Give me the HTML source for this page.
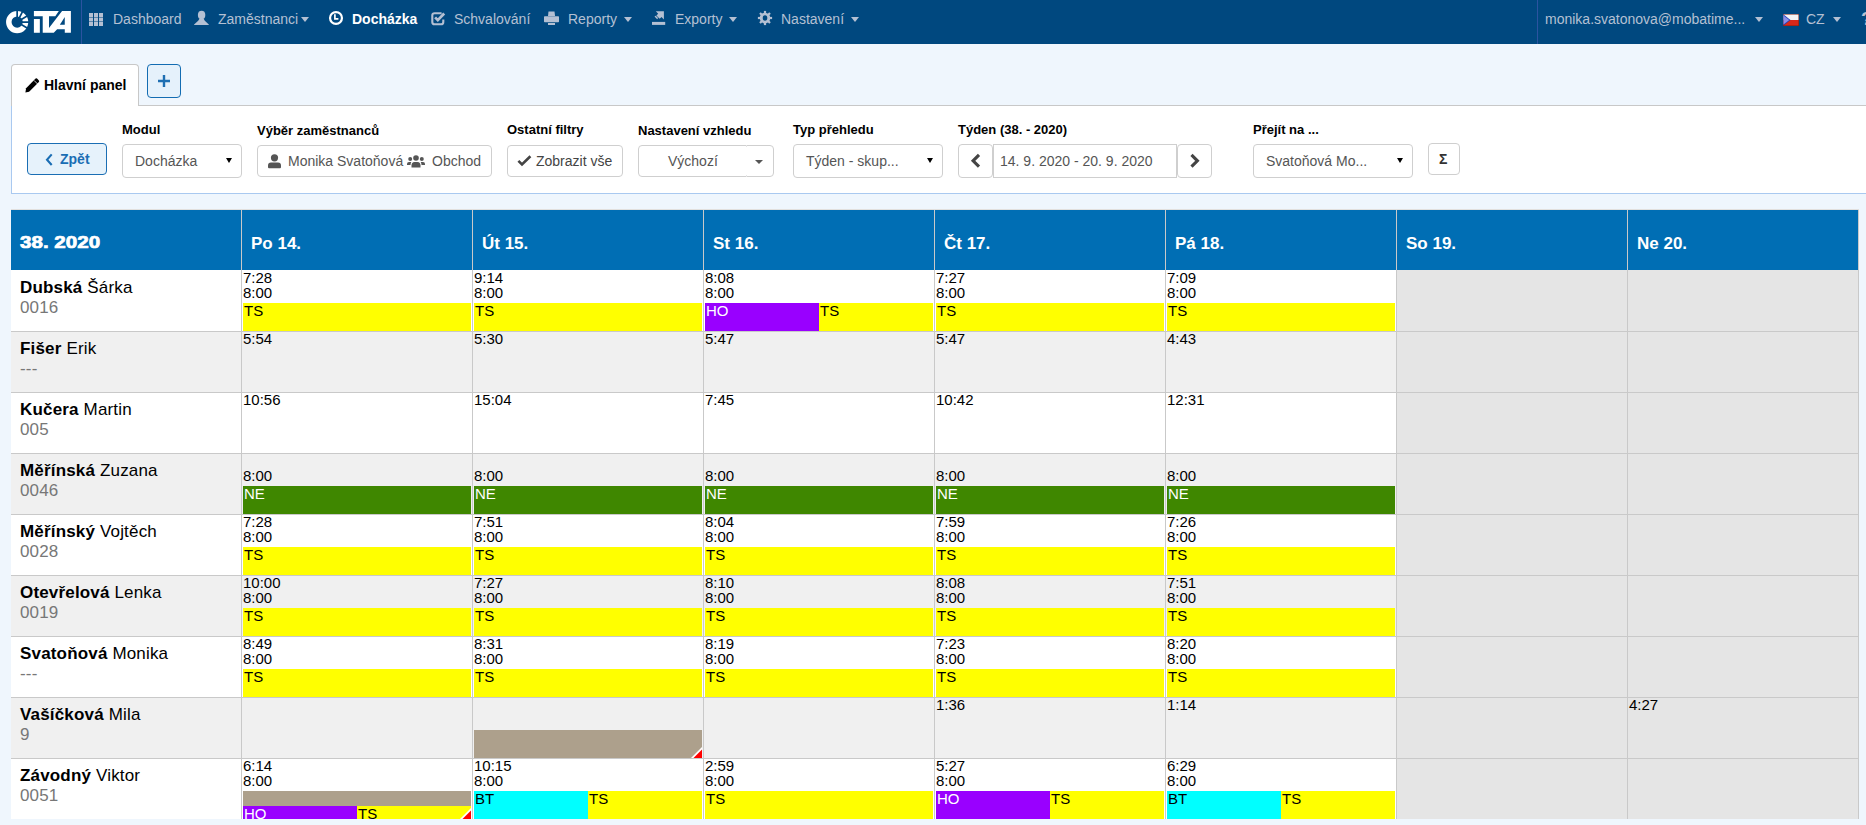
<!DOCTYPE html>
<html><head><meta charset="utf-8">
<style>
*{box-sizing:border-box;margin:0;padding:0}
html,body{width:1866px;height:825px;overflow:hidden}
body{background:#eff6fd;font-family:"Liberation Sans",sans-serif;font-size:14px;color:#000;position:relative}
.abs{position:absolute}
#nav{position:absolute;left:0;top:0;width:1866px;height:44px;background:#00487f}
.sep{position:absolute;top:0;width:1px;height:44px;background:#2c53a0}
.ni{position:absolute;top:11px;font-size:14px;color:#b4c0d3;white-space:nowrap;line-height:16px}
.ni.act{color:#fff;font-weight:bold}
.caret{position:absolute;width:0;height:0;border-left:4.5px solid transparent;border-right:4.5px solid transparent;border-top:5px solid #b4c0d3}
#tab{position:absolute;left:11px;top:64px;width:128px;height:42px;background:#fff;border:1px solid #c8c8c8;border-bottom:none;border-radius:4px 4px 0 0;z-index:2}
#plus{position:absolute;left:147px;top:64px;width:34px;height:34px;background:#e5f1fb;border:1px solid #136cb2;border-radius:4px}
#panel{position:absolute;left:11px;top:105px;width:1870px;height:89px;background:#fff;border:1px solid #a9c9f0;border-top-color:#c8c8c8}
.lbl{position:absolute;top:122px;font-size:13px;font-weight:bold;line-height:15px;white-space:nowrap}
.box{position:absolute;border:1px solid #cfcfcf;border-radius:4px;background:#fff;color:#555;font-size:14px;white-space:nowrap}
.tri{position:absolute;width:0;height:0;border-left:3.5px solid transparent;border-right:3.5px solid transparent;border-top:5px solid #000}
.th{position:absolute;background:#006eb4}
.vl{position:absolute;width:1px;background:#c9c9c9;z-index:2}
.hl{position:absolute;left:11px;width:1848px;height:1px;background:#c9c9c9;z-index:2}
.htxt{position:absolute;color:#fff;font-weight:bold;font-size:17px;line-height:20px;white-space:nowrap;z-index:3}
.nm{position:absolute;font-size:17px;line-height:20px;white-space:nowrap;z-index:3;letter-spacing:0.17px}
.nm .id{color:#777}
.tm{position:absolute;font-size:15px;line-height:15px;white-space:nowrap;z-index:3}
.sy{display:inline-block}
.bar{position:absolute;height:28px;font-size:15px;line-height:15px;padding:0 0 0 1px;white-space:nowrap;overflow:hidden;z-index:1}
#tbl{position:absolute;left:11px;top:210px;width:1848px;height:615px;overflow:hidden}
</style></head>
<body>
<div id="nav">
  <svg class="abs" style="left:0;top:0" width="80" height="44" viewBox="0 0 80 44"><circle cx="17.15" cy="22.05" r="8.35" fill="none" stroke="#fff" stroke-width="5.50"/><path d="M17.15 22.05L17.15 9.95M17.15 22.05L22.64 11.27M17.15 22.05L27.52 15.82M17.15 22.05L29.25 22.05M17.15 22.05L27.52 28.28" stroke="#00487f" stroke-width="1.7"/><polygon fill="#fff" points="33.90,11.05 70.89,11.05 70.89,32.77 64.78,32.77 64.78,29.21 57.15,29.21 53.75,32.77 42.72,32.77 42.72,16.31 33.90,16.31"/><rect fill="#fff" x="33.90" y="19.03" width="5.94" height="13.74"/><polygon fill="#00487f" points="58.84,11.05 62.07,11.05 49.00,28.02 49.00,16.31 55.28,16.31"/><polygon fill="#00487f" points="59.86,24.63 64.78,16.99 64.78,24.63"/></svg>
  <div class="sep" style="left:81px"></div>

  <svg class="abs" style="left:88px;top:12.5px" width="16" height="14" viewBox="0 0 16 14"><g fill="#b4c0d3">
   <rect x="1" y="0" width="4" height="4"/><rect x="6" y="0" width="4" height="4"/><rect x="11" y="0" width="4" height="4"/>
   <rect x="1" y="4.5" width="4" height="4"/><rect x="6" y="4.5" width="4" height="4"/><rect x="11" y="4.5" width="4" height="4"/>
   <rect x="1" y="9" width="4" height="4"/><rect x="6" y="9" width="4" height="4"/><rect x="11" y="9" width="4" height="4"/></g></svg>
  <div class="ni" style="left:113px">Dashboard</div>
  <svg class="abs" style="left:194px;top:10px" width="16" height="16" viewBox="0 0 16 16"><g fill="#b4c0d3">
   <ellipse cx="7.6" cy="5" rx="3.7" ry="4.3"/><path d="M5.6 8.5h4l1.2 2.2 4 3.8V15H0.1v-0.5l4.1-3.8z"/></g></svg>
  <div class="ni" style="left:218px">Zaměstnanci</div>
  <div class="caret" style="left:301px;top:17px"></div>
  <svg class="abs" style="left:328px;top:10px" width="16" height="16" viewBox="0 0 16 16"><circle cx="8" cy="8" r="5.95" fill="none" stroke="#fff" stroke-width="2.2"/><path d="M6.9 4.2v4.7h3.5" fill="none" stroke="#fff" stroke-width="1.7"/></svg>
  <div class="ni act" style="left:352px">Docházka</div>
  <svg class="abs" style="left:431px;top:11px" width="16" height="15" viewBox="0 0 16 15"><path d="M10.6 2.2H3.6Q1.3 2.2 1.3 4.5v6.4q0 2.3 2.3 2.3h6.4q2.3 0 2.3-2.3V8.6" fill="none" stroke="#b4c0d3" stroke-width="2.1"/><path d="M4.1 6.4l2.7 2.7 6.4-6.6" fill="none" stroke="#b4c0d3" stroke-width="2.7"/></svg>
  <div class="ni" style="left:454px">Schvalování</div>
  <svg class="abs" style="left:544px;top:11px" width="16" height="15" viewBox="0 0 16 15"><g fill="#b4c0d3"><path d="M4.5 0.4h6l0.6 4.6H4z"/><rect x="0" y="5.3" width="15" height="5.9" rx="0.7"/><rect x="4" y="12" width="7" height="2"/></g></svg>
  <div class="ni" style="left:568px">Reporty</div>
  <div class="caret" style="left:624px;top:17px"></div>
  <svg class="abs" style="left:652px;top:11px" width="15" height="15" viewBox="0 0 15 15"><g fill="#b4c0d3"><rect x="0" y="10.9" width="13.2" height="3"/><path d="M3.8 0.3h8.1v8.1l-2.4-2.4-1.8 1.8-3.3-3.3 1.8-1.8z"/><path d="M2.5 5.6l1.2-0.9 2.4 2.4-0.9 1.2z"/></g></svg>
  <div class="ni" style="left:675px">Exporty</div>
  <div class="caret" style="left:729px;top:17px"></div>
  <svg class="abs" style="left:757px;top:10px" width="16" height="16" viewBox="0 0 16 16"><g fill="#b4c0d3"><circle cx="8" cy="8" r="5.3"/><rect x="6.9" y="0.9" width="2.2" height="14.2" transform="rotate(0 8 8)"/><rect x="6.9" y="0.9" width="2.2" height="14.2" transform="rotate(45 8 8)"/><rect x="6.9" y="0.9" width="2.2" height="14.2" transform="rotate(90 8 8)"/><rect x="6.9" y="0.9" width="2.2" height="14.2" transform="rotate(135 8 8)"/></g><ellipse cx="8" cy="8" rx="2.3" ry="2.8" fill="#00487f"/></svg>
  <div class="ni" style="left:781px">Nastavení</div>
  <div class="caret" style="left:851px;top:17px"></div>
  <div class="sep" style="left:1537px"></div>
  <div class="ni" style="left:1545px">monika.svatonova@mobatime...</div>
  <div class="caret" style="left:1755px;top:17px"></div>
  <svg class="abs" style="left:1783px;top:14px" width="16" height="12" viewBox="0 0 16 12"><rect x="0" y="0" width="16" height="12" fill="#7a1e12"/><rect x="0.5" y="0.5" width="15" height="5.5" fill="#f4f4f4"/><rect x="0.5" y="6" width="15" height="5.5" fill="#d8281a"/><path d="M0.5 0.5L7.5 6 0.5 11.5z" fill="#1f3fbf"/><path d="M0.5 1.5L6.2 6 0.5 10.5z" fill="#8b8ee6"/></svg>
  <div class="ni" style="left:1806px">CZ</div>
  <div class="caret" style="left:1833px;top:17px"></div>
  <div class="ni" style="left:1861px;top:8px;font-weight:bold;font-size:19px;line-height:22px">?</div>
</div>

<div id="panel"></div>
<div id="tab">
  <svg class="abs" style="left:13px;top:13px" width="15" height="15" viewBox="0 0 15 15"><path d="M10.6 0.6Q11.3 0 12 0.6L13.9 2.5Q14.5 3.2 13.9 3.9L4.1 13.7 0.4 14.4 1.1 10.3z" fill="#000"/><path d="M9 2.4l3.6 3.6" stroke="#fff" stroke-width="0.8"/></svg>
  <div class="abs" style="left:32px;top:12px;font-weight:bold;font-size:14px;line-height:16px;white-space:nowrap">Hlavní panel</div>
</div>
<div id="plus"><svg class="abs" style="left:9px;top:9px" width="14" height="14" viewBox="0 0 14 14"><path d="M7 1v12M1 7h12" stroke="#1f6fb2" stroke-width="2.4"/></svg></div>

<div class="box" style="left:27px;top:143px;width:80px;height:32px;background:#e6f2fb;border-color:#1a6eb4;color:#1a6eb4;font-weight:bold">
  <svg class="abs" style="left:16px;top:9px" width="10" height="14" viewBox="0 0 10 14"><path d="M7.7 1.4L3 6.7l4.7 5.3" fill="none" stroke="#1a6eb4" stroke-width="2.1"/></svg>
  <div class="abs" style="left:32px;top:7px;line-height:16px">Zpět</div>
</div>

<div class="lbl" style="left:122px">Modul</div>
<div class="box" style="left:122px;top:144px;width:120px;height:34px">
  <div class="abs" style="left:12px;top:8px;line-height:16px">Docházka</div>
  <div class="tri" style="left:102.5px;top:13px"></div>
</div>

<div class="lbl" style="left:257px;top:123px">Výběr zaměstnanců</div>
<div class="box" style="left:257px;top:145px;width:235px;height:32px">
  <svg class="abs" style="left:10px;top:8px" width="14" height="15" viewBox="0 0 14 15"><circle cx="6.5" cy="3.8" r="3.6" fill="#555"/><path d="M1 14.2Q0 14.2 0 13v-1.5Q0 8.6 3 8.6h7Q13 8.6 13 11.5V13q0 1.2-1 1.2z" fill="#555"/></svg>
  <div class="abs" style="left:30px;top:7px;line-height:16px">Monika Svatoňová</div>
  <svg class="abs" style="left:149px;top:9px" width="19" height="14" viewBox="0 0 19 14"><g fill="#555"><circle cx="9" cy="3" r="2.8"/><circle cx="3.2" cy="4" r="2"/><circle cx="14.8" cy="4" r="2"/><path d="M4.5 12.5v-2Q4.5 7 7.5 7h3Q13.5 7 13.5 10.5v2z"/><path d="M0 10v-1Q0 7 2 7h2.3Q3.5 8.5 3.5 10z"/><path d="M18 10v-1Q18 7 16 7h-2.3Q14.5 8.5 14.5 10z"/></g></svg>
  <div class="abs" style="left:174px;top:7px;line-height:16px">Obchod</div>
</div>

<div class="lbl" style="left:507px">Ostatní filtry</div>
<div class="box" style="left:507px;top:145px;width:116px;height:32px;color:#444">
  <svg class="abs" style="left:9px;top:9px" width="15" height="12" viewBox="0 0 15 12"><path d="M1.4 5.8l3.6 3.6L13.4 1.2" fill="none" stroke="#444" stroke-width="2.6"/></svg>
  <div class="abs" style="left:28px;top:7px;line-height:16px">Zobrazit vše</div>
</div>

<div class="lbl" style="left:638px;top:123px">Nastavení vzhledu</div>
<div class="box" style="left:638px;top:145px;width:136px;height:32px;color:#555">
  <div class="abs" style="left:107px;top:-1px;width:1px;height:2px;background:#e6e6e6"></div>
  <div class="abs" style="left:107px;top:29px;width:1px;height:2px;background:#e6e6e6"></div>
  <div class="abs" style="left:29px;top:7px;line-height:16px">Výchozí</div>
  <div class="caret" style="left:116px;top:14px;border-left-width:4px;border-right-width:4px;border-top:4px solid #555"></div>
</div>

<div class="lbl" style="left:793px">Typ přehledu</div>
<div class="box" style="left:793px;top:144px;width:150px;height:34px">
  <div class="abs" style="left:12px;top:8px;line-height:16px">Týden - skup...</div>
  <div class="tri" style="left:133px;top:13px"></div>
</div>

<div class="lbl" style="left:958px">Týden (38. - 2020)</div>
<div class="box" style="left:958px;top:144px;width:35px;height:34px"></div>
<div class="box" style="left:993px;top:144px;width:184px;height:34px;border-radius:0">
  <div class="abs" style="left:6px;top:8px;line-height:16px">14. 9. 2020 - 20. 9. 2020</div>
</div>
<div class="box" style="left:1177px;top:144px;width:35px;height:34px"></div>
<svg class="abs" style="left:968px;top:152px" width="16" height="18" viewBox="0 0 16 18"><path d="M11 2.9L5.1 8.8 11 14.7" fill="none" stroke="#444" stroke-width="3.1"/></svg>
<svg class="abs" style="left:1186px;top:152px" width="16" height="18" viewBox="0 0 16 18"><path d="M5.5 2.9L11.4 8.8 5.5 14.7" fill="none" stroke="#444" stroke-width="3.1"/></svg>

<div class="lbl" style="left:1253px">Přejít na ...</div>
<div class="box" style="left:1253px;top:144px;width:160px;height:34px">
  <div class="abs" style="left:12px;top:8px;line-height:16px">Svatoňová Mo...</div>
  <div class="tri" style="left:143px;top:13px"></div>
</div>

<div class="box" style="left:1428px;top:143px;width:32px;height:32px;color:#333;font-weight:bold">
  <div class="abs" style="left:10px;top:7px;line-height:16px;font-size:14px">Σ</div>
</div>

<div class="abs" style="left:0;top:0;width:1866px;height:819px;overflow:hidden">
<div class="abs" style="left:11px;top:209px;width:1848px;height:1px;background:#e2e0de"></div>
<div class="th" style="left:11px;top:210px;width:1848px;height:60px"></div>
<div class="htxt" style="left:20px;top:233px"><span style="display:inline-block;transform:scaleX(1.21);transform-origin:0 0;-webkit-text-stroke:0.7px #fff">38. 2020</span></div>
<div class="vl" style="left:241px;top:210px;height:609px"></div>
<div class="htxt" style="left:251px;top:234px">Po 14.</div>
<div class="vl" style="left:472px;top:210px;height:609px"></div>
<div class="htxt" style="left:482px;top:234px">Út 15.</div>
<div class="vl" style="left:703px;top:210px;height:609px"></div>
<div class="htxt" style="left:713px;top:234px">St 16.</div>
<div class="vl" style="left:934px;top:210px;height:609px"></div>
<div class="htxt" style="left:944px;top:234px">Čt 17.</div>
<div class="vl" style="left:1165px;top:210px;height:609px"></div>
<div class="htxt" style="left:1175px;top:234px">Pá 18.</div>
<div class="vl" style="left:1396px;top:210px;height:609px"></div>
<div class="htxt" style="left:1406px;top:234px">So 19.</div>
<div class="vl" style="left:1627px;top:210px;height:609px"></div>
<div class="htxt" style="left:1637px;top:234px">Ne 20.</div>
<div class="vl" style="left:1858px;top:210px;height:609px"></div>
<div class="abs" style="left:11px;top:270px;width:1616px;height:61px;background:#fff"></div>
<div class="abs" style="left:1397px;top:270px;width:461px;height:61px;background:#e5e5e5"></div>
<div class="hl" style="top:331px"></div>
<div class="nm" style="left:20px;top:278px"><b>Dubská</b> Šárka<br><span class="id">0016</span></div>
<div class="tm" style="left:243px;top:270px">7:28</div>
<div class="tm" style="left:243px;top:285px">8:00</div>
<div class="bar" style="left:243px;top:303px;width:228px;background:#ffff00;color:#000"><span class="sy">TS</span></div>
<div class="tm" style="left:474px;top:270px">9:14</div>
<div class="tm" style="left:474px;top:285px">8:00</div>
<div class="bar" style="left:474px;top:303px;width:228px;background:#ffff00;color:#000"><span class="sy">TS</span></div>
<div class="tm" style="left:705px;top:270px">8:08</div>
<div class="tm" style="left:705px;top:285px">8:00</div>
<div class="bar" style="left:705px;top:303px;width:114px;background:#9900ff;color:#fff"><span class="sy">HO</span></div>
<div class="bar" style="left:819px;top:303px;width:114px;background:#ffff00;color:#000"><span class="sy">TS</span></div>
<div class="tm" style="left:936px;top:270px">7:27</div>
<div class="tm" style="left:936px;top:285px">8:00</div>
<div class="bar" style="left:936px;top:303px;width:228px;background:#ffff00;color:#000"><span class="sy">TS</span></div>
<div class="tm" style="left:1167px;top:270px">7:09</div>
<div class="tm" style="left:1167px;top:285px">8:00</div>
<div class="bar" style="left:1167px;top:303px;width:228px;background:#ffff00;color:#000"><span class="sy">TS</span></div>
<div class="abs" style="left:11px;top:332px;width:1616px;height:60px;background:#f0f0f0"></div>
<div class="abs" style="left:1397px;top:332px;width:461px;height:60px;background:#e5e5e5"></div>
<div class="hl" style="top:392px"></div>
<div class="nm" style="left:20px;top:339px"><b>Fišer</b> Erik<br><span class="id">---</span></div>
<div class="tm" style="left:243px;top:331px">5:54</div>
<div class="tm" style="left:474px;top:331px">5:30</div>
<div class="tm" style="left:705px;top:331px">5:47</div>
<div class="tm" style="left:936px;top:331px">5:47</div>
<div class="tm" style="left:1167px;top:331px">4:43</div>
<div class="abs" style="left:11px;top:393px;width:1616px;height:60px;background:#fff"></div>
<div class="abs" style="left:1397px;top:393px;width:461px;height:60px;background:#e5e5e5"></div>
<div class="hl" style="top:453px"></div>
<div class="nm" style="left:20px;top:400px"><b>Kučera</b> Martin<br><span class="id">005</span></div>
<div class="tm" style="left:243px;top:392px">10:56</div>
<div class="tm" style="left:474px;top:392px">15:04</div>
<div class="tm" style="left:705px;top:392px">7:45</div>
<div class="tm" style="left:936px;top:392px">10:42</div>
<div class="tm" style="left:1167px;top:392px">12:31</div>
<div class="abs" style="left:11px;top:454px;width:1616px;height:60px;background:#f0f0f0"></div>
<div class="abs" style="left:1397px;top:454px;width:461px;height:60px;background:#e5e5e5"></div>
<div class="hl" style="top:514px"></div>
<div class="nm" style="left:20px;top:461px"><b>Měřínská</b> Zuzana<br><span class="id">0046</span></div>
<div class="tm" style="left:243px;top:468px">8:00</div>
<div class="bar" style="left:243px;top:486px;width:228px;background:#3f8700;color:#fff"><span class="sy">NE</span></div>
<div class="tm" style="left:474px;top:468px">8:00</div>
<div class="bar" style="left:474px;top:486px;width:228px;background:#3f8700;color:#fff"><span class="sy">NE</span></div>
<div class="tm" style="left:705px;top:468px">8:00</div>
<div class="bar" style="left:705px;top:486px;width:228px;background:#3f8700;color:#fff"><span class="sy">NE</span></div>
<div class="tm" style="left:936px;top:468px">8:00</div>
<div class="bar" style="left:936px;top:486px;width:228px;background:#3f8700;color:#fff"><span class="sy">NE</span></div>
<div class="tm" style="left:1167px;top:468px">8:00</div>
<div class="bar" style="left:1167px;top:486px;width:228px;background:#3f8700;color:#fff"><span class="sy">NE</span></div>
<div class="abs" style="left:11px;top:515px;width:1616px;height:60px;background:#fff"></div>
<div class="abs" style="left:1397px;top:515px;width:461px;height:60px;background:#e5e5e5"></div>
<div class="hl" style="top:575px"></div>
<div class="nm" style="left:20px;top:522px"><b>Měřínský</b> Vojtěch<br><span class="id">0028</span></div>
<div class="tm" style="left:243px;top:514px">7:28</div>
<div class="tm" style="left:243px;top:529px">8:00</div>
<div class="bar" style="left:243px;top:547px;width:228px;background:#ffff00;color:#000"><span class="sy">TS</span></div>
<div class="tm" style="left:474px;top:514px">7:51</div>
<div class="tm" style="left:474px;top:529px">8:00</div>
<div class="bar" style="left:474px;top:547px;width:228px;background:#ffff00;color:#000"><span class="sy">TS</span></div>
<div class="tm" style="left:705px;top:514px">8:04</div>
<div class="tm" style="left:705px;top:529px">8:00</div>
<div class="bar" style="left:705px;top:547px;width:228px;background:#ffff00;color:#000"><span class="sy">TS</span></div>
<div class="tm" style="left:936px;top:514px">7:59</div>
<div class="tm" style="left:936px;top:529px">8:00</div>
<div class="bar" style="left:936px;top:547px;width:228px;background:#ffff00;color:#000"><span class="sy">TS</span></div>
<div class="tm" style="left:1167px;top:514px">7:26</div>
<div class="tm" style="left:1167px;top:529px">8:00</div>
<div class="bar" style="left:1167px;top:547px;width:228px;background:#ffff00;color:#000"><span class="sy">TS</span></div>
<div class="abs" style="left:11px;top:576px;width:1616px;height:60px;background:#f0f0f0"></div>
<div class="abs" style="left:1397px;top:576px;width:461px;height:60px;background:#e5e5e5"></div>
<div class="hl" style="top:636px"></div>
<div class="nm" style="left:20px;top:583px"><b>Otevřelová</b> Lenka<br><span class="id">0019</span></div>
<div class="tm" style="left:243px;top:575px">10:00</div>
<div class="tm" style="left:243px;top:590px">8:00</div>
<div class="bar" style="left:243px;top:608px;width:228px;background:#ffff00;color:#000"><span class="sy">TS</span></div>
<div class="tm" style="left:474px;top:575px">7:27</div>
<div class="tm" style="left:474px;top:590px">8:00</div>
<div class="bar" style="left:474px;top:608px;width:228px;background:#ffff00;color:#000"><span class="sy">TS</span></div>
<div class="tm" style="left:705px;top:575px">8:10</div>
<div class="tm" style="left:705px;top:590px">8:00</div>
<div class="bar" style="left:705px;top:608px;width:228px;background:#ffff00;color:#000"><span class="sy">TS</span></div>
<div class="tm" style="left:936px;top:575px">8:08</div>
<div class="tm" style="left:936px;top:590px">8:00</div>
<div class="bar" style="left:936px;top:608px;width:228px;background:#ffff00;color:#000"><span class="sy">TS</span></div>
<div class="tm" style="left:1167px;top:575px">7:51</div>
<div class="tm" style="left:1167px;top:590px">8:00</div>
<div class="bar" style="left:1167px;top:608px;width:228px;background:#ffff00;color:#000"><span class="sy">TS</span></div>
<div class="abs" style="left:11px;top:637px;width:1616px;height:60px;background:#fff"></div>
<div class="abs" style="left:1397px;top:637px;width:461px;height:60px;background:#e5e5e5"></div>
<div class="hl" style="top:697px"></div>
<div class="nm" style="left:20px;top:644px"><b>Svatoňová</b> Monika<br><span class="id">---</span></div>
<div class="tm" style="left:243px;top:636px">8:49</div>
<div class="tm" style="left:243px;top:651px">8:00</div>
<div class="bar" style="left:243px;top:669px;width:228px;background:#ffff00;color:#000"><span class="sy">TS</span></div>
<div class="tm" style="left:474px;top:636px">8:31</div>
<div class="tm" style="left:474px;top:651px">8:00</div>
<div class="bar" style="left:474px;top:669px;width:228px;background:#ffff00;color:#000"><span class="sy">TS</span></div>
<div class="tm" style="left:705px;top:636px">8:19</div>
<div class="tm" style="left:705px;top:651px">8:00</div>
<div class="bar" style="left:705px;top:669px;width:228px;background:#ffff00;color:#000"><span class="sy">TS</span></div>
<div class="tm" style="left:936px;top:636px">7:23</div>
<div class="tm" style="left:936px;top:651px">8:00</div>
<div class="bar" style="left:936px;top:669px;width:228px;background:#ffff00;color:#000"><span class="sy">TS</span></div>
<div class="tm" style="left:1167px;top:636px">8:20</div>
<div class="tm" style="left:1167px;top:651px">8:00</div>
<div class="bar" style="left:1167px;top:669px;width:228px;background:#ffff00;color:#000"><span class="sy">TS</span></div>
<div class="abs" style="left:11px;top:698px;width:1616px;height:60px;background:#f0f0f0"></div>
<div class="abs" style="left:1397px;top:698px;width:461px;height:60px;background:#e5e5e5"></div>
<div class="hl" style="top:758px"></div>
<div class="nm" style="left:20px;top:705px"><b>Vašíčková</b> Mila<br><span class="id">9</span></div>
<div class="abs" style="left:474px;top:730px;width:228px;height:28px;background:#ada08c"></div>
<svg class="abs" style="left:691px;top:747px;z-index:3" width="11" height="11" viewBox="0 0 11 11"><path d="M11 0V11H0z" fill="#fff"/><path d="M11 2.5V11H2.5z" fill="#ff0000"/></svg>
<div class="tm" style="left:936px;top:697px">1:36</div>
<div class="tm" style="left:1167px;top:697px">1:14</div>
<div class="abs" style="left:11px;top:759px;width:1616px;height:60px;background:#fff"></div>
<div class="abs" style="left:1397px;top:759px;width:461px;height:60px;background:#e5e5e5"></div>
<div class="hl" style="top:819px"></div>
<div class="nm" style="left:20px;top:766px"><b>Závodný</b> Viktor<br><span class="id">0051</span></div>
<div class="tm" style="left:243px;top:758px">6:14</div>
<div class="tm" style="left:243px;top:773px">8:00</div>
<div class="abs" style="left:243px;top:791px;width:228px;height:15px;background:#ada08c"></div>
<div class="bar" style="left:243px;top:806px;width:114px;background:#9900ff;color:#fff"><span class="sy">HO</span></div>
<div class="bar" style="left:357px;top:806px;width:114px;background:#ffff00;color:#000"><span class="sy">TS</span></div>
<svg class="abs" style="left:460px;top:808px;z-index:3" width="11" height="11" viewBox="0 0 11 11"><path d="M11 0V11H0z" fill="#fff"/><path d="M11 2.5V11H2.5z" fill="#ff0000"/></svg>
<div class="tm" style="left:474px;top:758px">10:15</div>
<div class="tm" style="left:474px;top:773px">8:00</div>
<div class="bar" style="left:474px;top:791px;width:114px;background:#00ffff;color:#000"><span class="sy">BT</span></div>
<div class="bar" style="left:588px;top:791px;width:114px;background:#ffff00;color:#000"><span class="sy">TS</span></div>
<div class="tm" style="left:705px;top:758px">2:59</div>
<div class="tm" style="left:705px;top:773px">8:00</div>
<div class="bar" style="left:705px;top:791px;width:228px;background:#ffff00;color:#000"><span class="sy">TS</span></div>
<div class="tm" style="left:936px;top:758px">5:27</div>
<div class="tm" style="left:936px;top:773px">8:00</div>
<div class="bar" style="left:936px;top:791px;width:114px;background:#9900ff;color:#fff"><span class="sy">HO</span></div>
<div class="bar" style="left:1050px;top:791px;width:114px;background:#ffff00;color:#000"><span class="sy">TS</span></div>
<div class="tm" style="left:1167px;top:758px">6:29</div>
<div class="tm" style="left:1167px;top:773px">8:00</div>
<div class="bar" style="left:1167px;top:791px;width:114px;background:#00ffff;color:#000"><span class="sy">BT</span></div>
<div class="bar" style="left:1281px;top:791px;width:114px;background:#ffff00;color:#000"><span class="sy">TS</span></div>
<div class="tm" style="left:1629px;top:697px">4:27</div>
</div>
</body></html>
